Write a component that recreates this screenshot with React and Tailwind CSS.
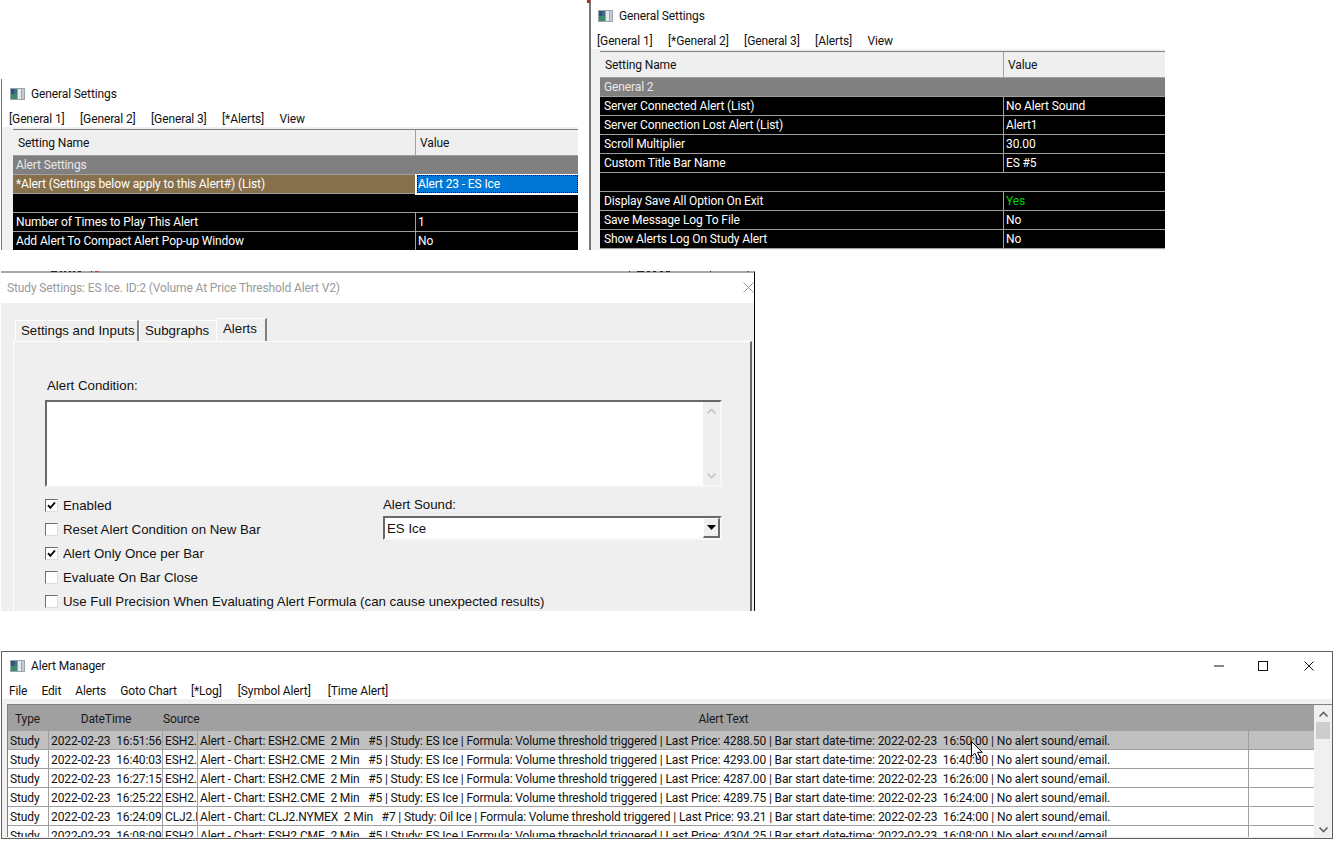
import React from 'react';

const AppIcon = () => (
  <svg width="15" height="12" viewBox="0 0 15 12" className="shrink-0">
    <rect x="0" y="0" width="15" height="12" fill="#9aa5ad" />
    <rect x="1" y="1" width="6" height="10" fill="#3f6f7f" />
    <rect x="1" y="1" width="3" height="5" fill="#2c4f86" />
    <rect x="1" y="6" width="6" height="5" fill="#3d8a6c" />
    <rect x="8" y="1" width="3" height="10" fill="#e6e9ea" />
    <rect x="12" y="1" width="2" height="10" fill="#c5ccd0" />
  </svg>
);

const Menu = ({ items, gap }) => (
  <div className={`flex items-center text-[#111] ${gap}`}>
    {items.map((m) => <span key={m}>{m}</span>)}
  </div>
);

const SettingsTable = ({ col, rows, textPad }) => (
  <div className="border-t border-[#808080] overflow-hidden h-full">
    <div className="flex h-[26px] items-center border-b border-[#a0a0a0] bg-[#efefef] text-[#111]">
      <div style={{ width: col }} className="pl-[5px] h-full flex items-center border-r border-[#a0a0a0] shrink-0">Setting Name</div>
      <div className="pl-[4px]">Value</div>
    </div>
    {rows.map((r, i) => {
      if (r.section) return <div key={i} style={{ paddingLeft: textPad }} className="h-[19px] bg-[#808080] border-b border-[#a0a0a0] text-[#e8e8e8] leading-[18px]">{r.section}</div>;
      if (r.spacer) return <div key={i} className="h-[19px] bg-black border-b border-[#a0a0a0]" />;
      return (
        <div key={i} className="relative flex h-[19px] bg-black border-b border-[#a0a0a0] text-white leading-[18px]">
          <div style={{ width: col, paddingLeft: textPad }} className={`border-r border-[#a0a0a0] shrink-0 ${r.tan ? 'bg-[#87704c]' : ''}`}>{r.name}</div>
          {r.selected ? (
            <div style={{ left: col - 1 }} className="absolute right-0 -top-px h-[21px] border-l-2 border-b-2 border-t border-white bg-[#0078d7]">
              <div className="h-full border border-dotted border-black leading-[17px] text-white">{r.value}</div>
            </div>
          ) : (
            <div className={`pl-[2px] ${r.green ? 'text-[#00d000]' : ''}`}>{r.value}</div>
          )}
        </div>
      );
    })}
  </div>
);

const Check = ({ on }) => (
  <span className="w-[13px] h-[13px] bg-white border border-t-[#6d6d6d] border-l-[#6d6d6d] border-r-[#dcdcdc] border-b-[#dcdcdc] flex items-center justify-center shrink-0">
    {on && (
      <svg width="9" height="9" viewBox="0 0 9 9"><path d="M1 4.2 L3.4 6.8 L8 1.4" fill="none" stroke="#111" strokeWidth="2" /></svg>
    )}
  </span>
);

const CheckRow = ({ on, label }) => (
  <div className="h-[24px] flex items-center gap-[5px] whitespace-nowrap">
    <Check on={on} />
    <span className="pt-px">{label}</span>
  </div>
);

const alerts = [
  ['2022-02-23  16:51:56', 'ESH2.CME', 'Alert - Chart: ESH2.CME  2 Min   #5 | Study: ES Ice | Formula: Volume threshold triggered | Last Price: 4288.50 | Bar start date-time: 2022-02-23  16:50:00 | No alert sound/email.'],
  ['2022-02-23  16:40:03', 'ESH2.CME', 'Alert - Chart: ESH2.CME  2 Min   #5 | Study: ES Ice | Formula: Volume threshold triggered | Last Price: 4293.00 | Bar start date-time: 2022-02-23  16:40:00 | No alert sound/email.'],
  ['2022-02-23  16:27:15', 'ESH2.CME', 'Alert - Chart: ESH2.CME  2 Min   #5 | Study: ES Ice | Formula: Volume threshold triggered | Last Price: 4287.00 | Bar start date-time: 2022-02-23  16:26:00 | No alert sound/email.'],
  ['2022-02-23  16:25:22', 'ESH2.CME', 'Alert - Chart: ESH2.CME  2 Min   #5 | Study: ES Ice | Formula: Volume threshold triggered | Last Price: 4289.75 | Bar start date-time: 2022-02-23  16:24:00 | No alert sound/email.'],
  ['2022-02-23  16:24:09', 'CLJ2.NYMEX', 'Alert - Chart: CLJ2.NYMEX  2 Min   #7 | Study: Oil Ice | Formula: Volume threshold triggered | Last Price: 93.21 | Bar start date-time: 2022-02-23  16:24:00 | No alert sound/email.'],
  ['2022-02-23  16:08:09', 'ESH2.CME', 'Alert - Chart: ESH2.CME  2 Min   #5 | Study: ES Ice | Formula: Volume threshold triggered | Last Price: 4304.25 | Bar start date-time: 2022-02-23  16:08:00 | No alert sound/email.'],
];

const Chevron = ({ up, color = '#606060' }) => (
  <svg width="11" height="7" viewBox="0 0 11 7">
    <path d={up ? 'M1.5 5.5 L5.5 1.5 L9.5 5.5' : 'M1.5 1.5 L5.5 5.5 L9.5 1.5'} fill="none" stroke={color} strokeWidth="1.6" />
  </svg>
);

export default function App() {
  return (
    <div className="relative w-[1335px] h-[842px] bg-white overflow-hidden text-[12px] tracking-[-0.115px] font-['Roboto',sans-serif]">
      {/* General Settings: Alerts */}
      <div className="absolute left-px top-[79px] w-[577px] h-[171px] border-l border-[#777] flex flex-col">
        <div className="h-[29px] flex items-center gap-[6px] pl-[8px] pt-px text-[#111] shrink-0"><AppIcon />General Settings</div>
        <div className="h-[19px] pl-[7px] pt-[2px] flex items-center shrink-0">
          <Menu gap="gap-[15.4px]" items={['[General 1]', '[General 2]', '[General 3]', '[*Alerts]', 'View']} />
        </div>
        <div className="flex-1 min-h-0 bg-[#f0f0f0] pt-[2px] pl-[11px]">
          <SettingsTable col={403} textPad={3} rows={[
            { section: 'Alert Settings' },
            { name: '*Alert (Settings below apply to this Alert#) (List)', value: 'Alert 23 - ES Ice', tan: true, selected: true },
            { spacer: true },
            { name: 'Number of Times to Play This Alert', value: '1' },
            { name: 'Add Alert To Compact Alert Pop-up Window', value: 'No' },
          ]} />
        </div>
      </div>

      {/* General Settings: General 2 */}
      <div className="absolute left-[589px] top-0 w-[576px] h-[250px] border-l-2 border-[#777] flex flex-col">
        <div className="h-[31px] flex items-center gap-[6px] pl-[7px] pt-[1px] text-[#111] shrink-0"><AppIcon />General Settings</div>
        <div className="h-[18px] pl-[6px] pt-[2px] flex items-center shrink-0">
          <Menu gap="gap-[15.4px]" items={['[General 1]', '[*General 2]', '[General 3]', '[Alerts]', 'View']} />
        </div>
        <div className="flex-1 min-h-0 bg-[#f0f0f0] pt-[2px] pl-[9px]">
          <SettingsTable col={404} textPad={4} rows={[
            { section: 'General 2' },
            { name: 'Server Connected Alert (List)', value: 'No Alert Sound' },
            { name: 'Server Connection Lost Alert (List)', value: 'Alert1' },
            { name: 'Scroll Multiplier', value: '30.00' },
            { name: 'Custom Title Bar Name', value: 'ES #5' },
            { spacer: true },
            { name: 'Display Save All Option On Exit', value: 'Yes', green: true },
            { name: 'Save Message Log To File', value: 'No' },
            { name: 'Show Alerts Log On Study Alert', value: 'No' },
          ]} />
        </div>
      </div>

      {/* Study Settings */}
      <div className="absolute left-px top-[271px] w-[754px] h-[340px] border-t-2 border-t-[#a8a8a8] border-r border-r-black flex flex-col font-['Liberation_Sans',sans-serif] text-[13.28px] tracking-normal text-[#111]">
        <div className="h-[30px] bg-white flex items-center justify-between pl-[6px] text-[#9a9a9a] text-[12px] tracking-[-0.13px] font-['Roboto',sans-serif] shrink-0">
          <span>Study Settings: ES Ice. ID:2 (Volume At Price Threshold Alert V2)</span>
          <svg width="11" height="11" viewBox="0 0 11 11" className="mb-[2px]"><path d="M0.5 0.5 L10.5 10.5 M10.5 0.5 L0.5 10.5" stroke="#9a9a9a" strokeWidth="1" /></svg>
        </div>
        <div className="flex-1 min-h-0 bg-[#efefef] flex flex-col pl-[12px] pr-[2px] pt-[15px]">
          <div className="flex items-end h-[23px] pl-[2px] shrink-0">
            <div className="h-[21px] w-[124px] flex items-center pl-[5px] border-l border-t border-r-2 border-l-white border-t-white border-r-[#808080]">Settings and Inputs</div>
            <div className="h-[21px] w-[77px] flex items-center pl-[5px] border-t border-l border-t-white border-l-white">Subgraphs</div>
            <div className="h-[23px] w-[51px] flex items-center pl-[6px] border-t border-l border-r-2 border-t-white border-l-white border-r-[#808080] bg-[#efefef] pb-[2px]">Alerts</div>
          </div>
          <div className="flex-1 min-h-0 border-t border-l border-r-2 border-t-white border-l-white border-r-[#696969] pl-[31px] pt-[36px]">
            <div className="h-[16px] leading-[16px] ml-[2px]">Alert Condition:</div>
            <div className="mt-[6px] w-[677px] h-[87px] border-t-2 border-l-2 border-b-2 border-r-2 border-t-[#696969] border-l-[#696969] border-r-[#f8f8f8] border-b-[#f8f8f8] bg-white flex justify-end">
              <div className="w-[17px] bg-[#efefef] flex flex-col items-center justify-between py-[6px]">
                <Chevron up color="#c4c4c4" />
                <Chevron color="#c4c4c4" />
              </div>
            </div>
            <div className="flex mt-[6px]">
              <div className="w-[338px] shrink-0">
                <CheckRow on label="Enabled" />
                <CheckRow label="Reset Alert Condition on New Bar" />
                <CheckRow on label="Alert Only Once per Bar" />
                <CheckRow label="Evaluate On Bar Close" />
                <CheckRow label="Use Full Precision When Evaluating Alert Formula (can cause unexpected results)" />
              </div>
              <div className="w-[339px] pt-[4px]">
                <div className="h-[16px] leading-[16px]">Alert Sound:</div>
                <div className="mt-[3px] h-[24px] border-2 border-t-[#696969] border-l-[#696969] border-r-[#f8f8f8] border-b-[#f8f8f8] bg-white flex items-center justify-between pl-[2px] pt-px">
                  <span>ES Ice</span>
                  <div className="w-[17px] h-[20px] -mt-px bg-[#efefef] border border-r-2 border-b-2 border-t-white border-l-white border-r-[#696969] border-b-[#696969] flex items-center justify-center">
                    <svg width="9" height="5" viewBox="0 0 9 5"><path d="M0 0 H9 L4.5 5 Z" fill="#000" /></svg>
                  </div>
                </div>
              </div>
            </div>
          </div>
        </div>
      </div>

      {/* Alert Manager */}
      <div className="absolute left-px top-[651px] w-[1332px] h-[188px] border border-[#606060] bg-white flex flex-col">
        <div className="h-[28px] flex items-center justify-between shrink-0 text-[#111]">
          <div className="flex items-center gap-[6px] pl-[8px]"><AppIcon />Alert Manager</div>
          <div className="flex items-center pb-px">
            <svg width="10" height="2" viewBox="0 0 10 2" className="mr-[34px]"><rect width="10" height="1" y="0.5" fill="#111" /></svg>
            <svg width="10" height="10" viewBox="0 0 10 10" className="mr-[36px]"><rect x="0.5" y="0.5" width="9" height="9" fill="none" stroke="#111" /></svg>
            <svg width="10" height="10" viewBox="0 0 10 10" className="mr-[18px]"><path d="M0.5 0.5 L9.5 9.5 M9.5 0.5 L0.5 9.5" stroke="#111" /></svg>
          </div>
        </div>
        <div className="h-[19px] pl-[7px] pt-[2px] flex items-center shrink-0 text-[#111] gap-[14px]">
          <span>File</span>
          <span>Edit</span>
          <span>Alerts</span>
          <span>Goto Chart</span>
          <span>[*Log]</span>
          <span className="ml-[2px]">[Symbol Alert]</span>
          <span className="ml-[3px]">[Time Alert]</span>
        </div>
        <div className="flex-1 min-h-0 bg-[#f0f0f0] pt-[5px] pl-[5px] pb-px">
          <div className="h-full flex border-t border-l border-[#808080] overflow-hidden">
            <div className="w-[1306px] shrink-0 overflow-hidden text-[#111]">
              <div className="h-[26px] bg-[#a0a0a0] border-b border-[#a0a0a0] flex items-center pt-[2px] text-[#1a1a1a]">
                <div className="w-[41px] pl-[7px]">Type</div>
                <div className="w-[114px] text-center">DateTime</div>
                <div className="w-[35px]">Source</div>
                <div className="w-[1051px] text-center">Alert Text</div>
              </div>
              {alerts.map((a, i) => (
                <div key={i} className={`h-[19px] flex border-b border-[#a0a0a0] leading-[20px] whitespace-pre ${i === 0 ? 'bg-[#c0c0c0]' : 'bg-white'}`}>
                  <div className="w-[41px] pl-[2px] border-r border-[#a0a0a0]">Study</div>
                  <div className="w-[114px] pl-[2px] border-r border-[#a0a0a0]">{a[0]}</div>
                  <div className="w-[35px] pl-[2px] border-r border-[#a0a0a0] overflow-hidden">{a[1]}</div>
                  <div className="w-[1051px] pl-[2px] border-r border-[#a0a0a0] overflow-hidden">{a[2]}</div>
                  <div className="flex-1" />
                </div>
              ))}
            </div>
            <div className="flex-1 bg-[#f0f0f0] flex flex-col items-center justify-between pt-[6px] pb-[4px] relative">
              <Chevron up />
              <div className="absolute top-[17px] left-[2px] right-[2px] h-[17px] bg-[#cdcdcd]" />
              <Chevron />
            </div>
          </div>
        </div>
      </div>

      {/* Scraps of the chart behind the windows */}
      <svg width="760" height="3" viewBox="0 0 760 3" className="absolute left-0 top-[270px]">
        <path d="M51 1.5H57M60 1.5H62M64 1.5H66M69 1.5H71M73 1.5H75M78 1.5H81M91 1.5H92M629 1.5H630M637 1.5H644M647 1.5H650M653 1.5H656M660 1.5H663M666 1.5H670M710 1.5H711" stroke="#222" />
        <path d="M95 1.5H99" stroke="#d04040" />
        <path d="M747 1.5H749" stroke="#2a8a2a" />
      </svg>
      <svg width="4" height="3" viewBox="0 0 4 3" className="absolute left-[587px] top-0">
        <rect width="3" height="3" fill="#c02020" />
      </svg>

      {/* Mouse pointer */}
      <svg width="13" height="20" viewBox="0 0 13 20" className="absolute left-[971px] top-[741px]">
        <path d="M0.5 0.5 V15.5 L4 12.3 L6.8 18.7 L9.4 17.6 L6.6 11.3 L11.3 11.3 Z" fill="#fff" stroke="#000" strokeWidth="1" />
      </svg>
    </div>
  );
}
